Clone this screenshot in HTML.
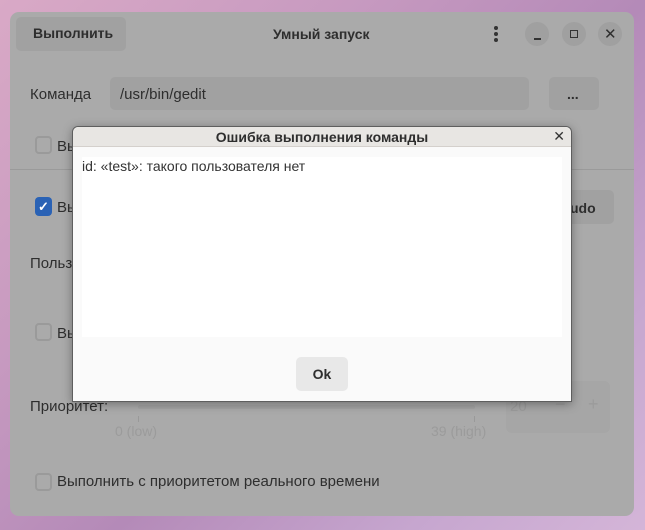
<!DOCTYPE html>
<html><head><meta charset="utf-8"><style>
*{margin:0;padding:0;box-sizing:border-box}
body{width:645px;height:530px;overflow:hidden;position:relative;font-family:"Liberation Sans",sans-serif;
background:linear-gradient(135deg,#d9a9c6 0%,#c79ac0 30%,#b48ab8 55%,#c6a6cf 80%,#d4b5d8 100%);}
.win{position:absolute;left:10px;top:12px;width:624px;height:504px;background:#aaaaaa;border-radius:9px;color:#2e2e2e;font-size:14px}
.a{position:absolute}
.btn{background:#a1a1a1;border-radius:5px}
.cb{position:absolute;width:17px;height:18px;border:2px solid #9a9a9a;border-radius:4px}
.g{color:#9b9b9b}
.dlg{position:absolute;left:72px;top:126px;width:500px;height:276px;background:#fafafa;border:1px solid #5e5e5e;border-radius:6px 6px 0 0;box-shadow:0 2px 10px rgba(0,0,0,.35)}
</style></head><body>
<div class="win">
 <div class="a btn" style="left:6px;top:5px;width:110px;height:34px"></div>
 <div class="a" style="left:23px;top:13px;font-weight:bold;font-size:14px">Выполнить</div>
 <div class="a" style="left:263px;top:14px;font-weight:bold;font-size:14px">Умный запуск</div>
 <div class="a" style="left:484px;top:14px;width:4px">
  <div style="width:4px;height:4px;border-radius:2px;background:#333;margin-bottom:2px"></div>
  <div style="width:4px;height:4px;border-radius:2px;background:#333;margin-bottom:2px"></div>
  <div style="width:4px;height:4px;border-radius:2px;background:#333"></div></div>
 <div class="a" style="left:515px;top:10px;width:24px;height:24px;border-radius:12px;background:#a0a0a0"></div>
 <div class="a" style="left:524px;top:26px;width:7px;height:1.5px;background:#333"></div>
 <div class="a" style="left:552px;top:10px;width:24px;height:24px;border-radius:12px;background:#a0a0a0"></div>
 <div class="a" style="left:560px;top:18px;width:8px;height:8px;border:1.3px solid #333"></div>
 <div class="a" style="left:588px;top:10px;width:24px;height:24px;border-radius:12px;background:#a0a0a0"></div>
 <div class="a" style="left:594px;top:13px;font-size:15px">✕</div>
 <div class="a" style="left:20px;top:74px;font-size:15px">Команда</div>
 <div class="a btn" style="left:100px;top:65px;width:419px;height:33px"></div>
 <div class="a" style="left:110px;top:74px;font-size:15px">/usr/bin/gedit</div>
 <div class="a btn" style="left:539px;top:65px;width:50px;height:33px"></div>
 <div class="a" style="left:557px;top:74px;font-weight:bold">...</div>
 <div class="cb" style="left:25px;top:124px"></div>
 <div class="a" style="left:47px;top:126px;font-size:15px">Вы</div>
 <div class="a" style="left:0;top:157px;width:624px;height:1px;background:#9a9a9a"></div>
 <div class="a" style="left:25px;top:185px;width:17px;height:19px;border-radius:4px;background:#2a62b5;color:#fff;font-size:13px;text-align:center;line-height:19px;font-weight:bold">✓</div>
 <div class="a" style="left:47px;top:187px;font-size:15px">Вы</div>
 <div class="a btn" style="left:540px;top:178px;width:64px;height:34px"></div>
 <div class="a" style="left:560px;top:188px;font-weight:bold">udo</div>
 <div class="a" style="left:20px;top:243px;font-size:15px">Польз</div>
 <div class="cb" style="left:25px;top:311px"></div>
 <div class="a" style="left:47px;top:313px;font-size:15px">Вы</div>
 <div class="a" style="left:20px;top:386px;font-size:15px">Приоритет:</div>
 <div class="a" style="left:128px;top:393px;width:337px;height:4px;background:#a3a3a3;border-radius:2px"></div>
 <div class="a" style="left:128px;top:404px;width:1px;height:6px;background:#999"></div>
 <div class="a" style="left:464px;top:404px;width:1px;height:6px;background:#999"></div>
 <div class="a g" style="left:105px;top:411px;font-size:14px">0 (low)</div>
 <div class="a g" style="left:421px;top:411px;font-size:14px">39 (high)</div>
 <div class="a" style="left:496px;top:369px;width:104px;height:52px;background:#a6a6a6;border-radius:6px"></div>
 <div class="a g" style="left:500px;top:386px;font-size:15px">20</div>
 <div class="a g" style="left:545px;top:382px;font-size:18px">−</div>
 <div class="a g" style="left:578px;top:382px;font-size:18px">+</div>
 <div class="cb" style="left:25px;top:461px"></div>
 <div class="a" style="left:47px;top:461px;font-size:15px">Выполнить с приоритетом реального времени</div>
</div>
<div class="dlg">
 <div style="height:20px;background:#e8e6e3;border-bottom:1px solid #d4d0cc;border-radius:6px 6px 0 0;text-align:center;font-weight:bold;font-size:14px;line-height:20px;color:#2e2e2e">Ошибка выполнения команды</div>
 <div class="a" style="right:6px;top:1px;font-size:14px;color:#333">✕</div>
 <div class="a" style="left:9px;top:30px;width:480px;height:180px;background:#fff"></div>
 <div class="a" style="left:9px;top:31px;font-size:14px;color:#333">id: «test»: такого пользователя нет</div>
 <div class="a" style="left:223px;top:230px;width:52px;height:34px;background:#e8e8e8;border-radius:5px;text-align:center;line-height:34px;font-weight:bold;font-size:14px;color:#2e2e2e">Ok</div>
</div>
</body></html>
